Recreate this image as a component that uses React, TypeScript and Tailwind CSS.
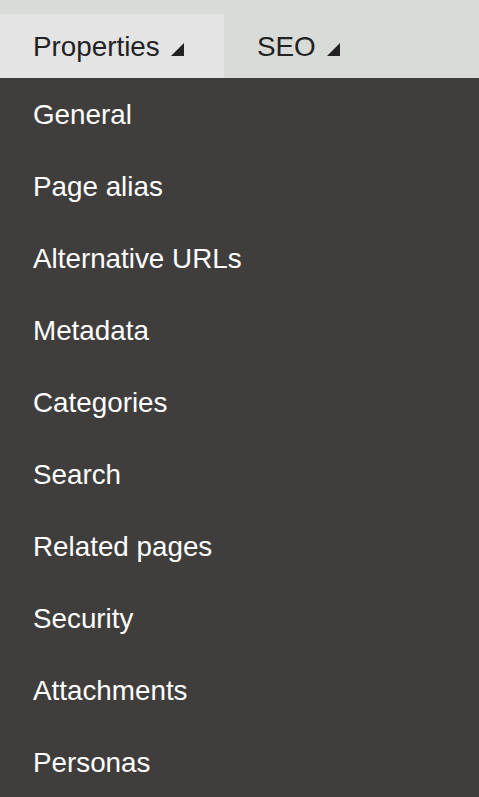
import React from 'react';

const items = [
  'General',
  'Page alias',
  'Alternative URLs',
  'Metadata',
  'Categories',
  'Search',
  'Related pages',
  'Security',
  'Attachments',
  'Personas',
];

const Caret: React.FC = () => (
  <svg width="13" height="13" viewBox="0 0 13 13" className="shrink-0">
    <polygon points="13,0 13,13 0,13" fill="#222222" />
  </svg>
);

const App: React.FC = () => {
  return (
    <div className="min-h-screen w-[479px] overflow-hidden bg-[#403e3c] font-['Liberation_Sans',Arial,sans-serif]">
      {/* tab bar */}
      <div className="flex h-[78px] items-end bg-[#d9dbd8]">
        <button className="flex h-[64px] w-[224px] items-center bg-[#e4e4e4] pl-[33px] pt-[1px] text-[27.8px] text-[#222]">
          <span>Properties</span>
          <span className="ml-[11px] mt-[6px]">
            <Caret />
          </span>
        </button>
        <button className="flex h-[64px] items-center pl-[33px] pt-[1px] text-[27.8px] text-[#222]">
          <span>SEO</span>
          <span className="ml-[11px] mt-[6px]">
            <Caret />
          </span>
        </button>
      </div>

      {/* menu */}
      <ul>
        {items.map((item) => (
          <li key={item} className="flex h-[72px] items-center pl-[33px] pt-[1px] text-[27.8px] text-white">
            {item}
          </li>
        ))}
      </ul>
    </div>
  );
};

export default App;
